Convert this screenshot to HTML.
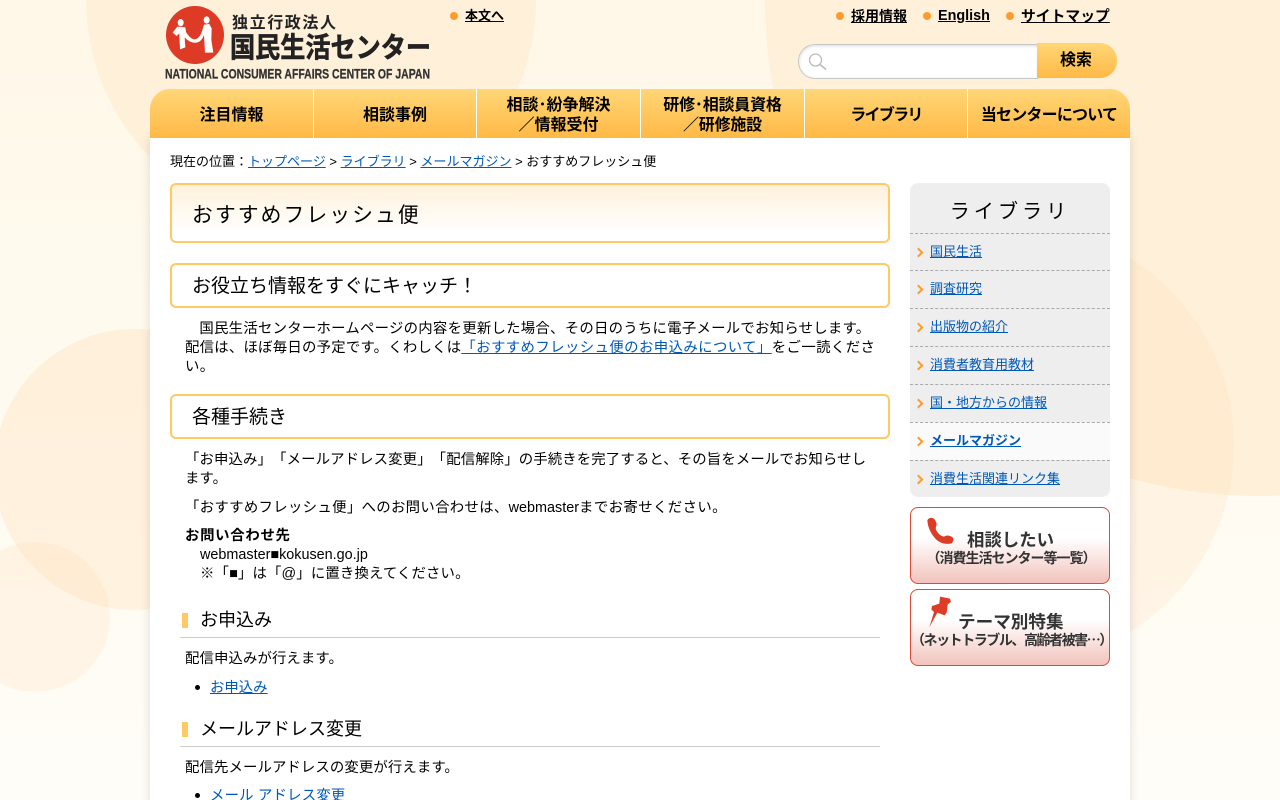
<!DOCTYPE html>
<html lang="ja"><head><meta charset="utf-8"><title>おすすめフレッシュ便</title>
<style>
*{box-sizing:border-box}
html,body{margin:0;padding:0;width:1280px;height:800px;overflow:hidden}
body{position:relative;font-family:"Liberation Sans","Noto Sans CJK JP",sans-serif;font-size:14.4px;line-height:19px;color:#000;background:linear-gradient(#fff8e8,#fffdf8);text-spacing-trim:space-all}
.c{position:absolute;border-radius:50%}
.a{position:absolute;white-space:nowrap}
a{color:#0058b8}
.dot{position:absolute;width:8px;height:8px;border-radius:50%;background:#ff9a2e}
.tl{position:absolute;font-weight:bold;font-size:14px;color:#000;text-decoration:underline;white-space:nowrap;line-height:20px}
#main{position:absolute;left:150px;top:138px;width:980px;height:680px;background:#fff;box-shadow:0 0 10px rgba(0,0,0,.13)}
#nav{position:absolute;left:150px;top:89px;width:980px;height:49px;border-radius:20px 20px 0 0;background:linear-gradient(#ffd677,#ffb945);overflow:hidden}
#nav div{position:absolute;top:0;height:49px;padding-top:4px;display:flex;align-items:center;justify-content:center;text-align:center;font-weight:bold;font-size:16px;line-height:20px;color:#000;border-right:1px solid #fff}
#nav div:last-child{border-right:0}
.h1,.h2{position:absolute;left:170px;width:720px;border:2px solid #ffc965;border-radius:6px;padding-left:20px}
.h1{top:183px;height:60px;line-height:61px;font-size:20.8px;letter-spacing:2.08px;background:linear-gradient(#fff1dc,#fff 85%)}
.h2{height:45px;line-height:43px;font-size:19px;background:#fff}
.h3{position:absolute;left:180px;width:700px;height:29px;border-bottom:1px solid #ccc;font-size:18px;line-height:22px;padding-left:20px}
.h3:before{content:"";position:absolute;left:2px;top:4px;width:6px;height:15px;background:#ffc965}
.p{position:absolute;left:185px;width:700px;white-space:nowrap}
#side{position:absolute;left:910px;top:183px;width:200px;height:314px;background:#eee;border-radius:8px;overflow:hidden}
#side .t{position:absolute;left:0;top:2px;width:200px;text-align:center;font-size:20px;line-height:54px;letter-spacing:4.1px}
#side .i{position:absolute;left:0;width:200px;height:38px;border-top:1px dashed #aaa;font-size:13px;line-height:35px;padding-left:20px}
#side .i:before{content:"";position:absolute;left:5px;top:15px;width:5px;height:5px;border-top:2px solid #ff9a2e;border-right:2px solid #ff9a2e;transform:rotate(45deg)}
.btn{position:absolute;left:910px;width:200px;height:77px;border:1px solid #dd4a36;border-radius:8px;background:linear-gradient(#fff 40%,#f2c3bc);color:#333;font-weight:bold;text-align:center}
.bu{position:absolute;left:195px;width:5px;height:5px;border-radius:50%;background:#000}
</style></head><body>
<div class="c" style="left:86px;top:-225px;width:450px;height:450px;background:#fff0da"></div>
<div class="c" style="left:765px;top:-496px;width:992px;height:992px;background:#fff0da"></div>
<div class="c" style="left:794px;top:225px;width:440px;height:440px;background:rgba(255,215,170,.2)"></div>
<div class="c" style="left:-6px;top:329px;width:281px;height:281px;background:rgba(255,215,170,.28)"></div>
<div class="c" style="left:-40px;top:542px;width:150px;height:150px;background:rgba(255,215,170,.2)"></div>
<div id="main"></div>

<svg style="position:absolute;left:160px;top:0" width="280" height="85" viewBox="160 0 280 85">
<circle cx="195" cy="35" r="29" fill="#de3b26"/>
<g fill="#fff" transform="translate(160 0) scale(.3333)">
<ellipse cx="62" cy="68" rx="9" ry="11"/><ellipse cx="140" cy="60" rx="9" ry="11"/>
<path d="M52 80L38 98L50 108L58 100L60 148L76 142L74 112Q90 130 110 128Q125 125 132 105L135 158L160 158L154 120L155 85L148 72L132 74L124 100Q115 118 102 118Q90 116 78 96L76 82Z"/>
</g>
<text x="232" y="28" font-size="16" font-weight="bold" fill="#222" textLength="104" lengthAdjust="spacing">独立行政法人</text>
<text x="230" y="57" font-size="28" font-weight="bold" fill="#222" textLength="201" lengthAdjust="spacingAndGlyphs" stroke="#222" stroke-width=".6">国民生活センター</text>
<text x="165" y="78.5" font-size="13.5" font-weight="bold" fill="#333" textLength="265" lengthAdjust="spacingAndGlyphs" stroke="#333" stroke-width=".3">NATIONAL CONSUMER AFFAIRS CENTER OF JAPAN</text>
</svg>

<span class="dot" style="left:450px;top:12px"></span><a class="tl" style="left:465px;top:6px;font-size:13px">本文へ</a>
<span class="dot" style="left:836px;top:12px"></span><a class="tl" style="left:851px;top:6px">採用情報</a>
<span class="dot" style="left:923px;top:12px"></span><a class="tl" style="left:938px;top:6px;font-size:14.4px">English</a>
<span class="dot" style="left:1006px;top:12px"></span><a class="tl" style="left:1021px;top:7px;font-size:14.8px">サイトマップ</a>

<div style="position:absolute;left:798px;top:44px;width:240px;height:35px;background:#fff;border:1px solid #c8c8c8;border-right:0;border-radius:17px 0 0 17px;box-shadow:inset 0 1px 3px rgba(0,0,0,.15)"></div>
<svg style="position:absolute;left:806px;top:50px" width="24" height="24" fill="none" stroke="#bbb" stroke-width="1.3"><circle cx="9.5" cy="10" r="6"/><path d="M14 14.5L20 19.5" stroke-width="1.6"/></svg>
<div style="position:absolute;left:1037px;top:43px;width:80px;height:35px;border-radius:0 17px 17px 0;background:linear-gradient(#ffd677,#ffb945);font-weight:bold;font-size:16px;line-height:36px;text-align:center;padding-right:2px">検索</div>

<div id="nav">
<div style="left:0;width:164px">注目情報</div>
<div style="left:164px;width:163px">相談事例</div>
<div style="left:327px;width:164px">相談･紛争解決<br>／情報受付</div>
<div style="left:491px;width:164px;letter-spacing:-.2px">研修･相談員資格<br>／研修施設</div>
<div style="left:655px;width:163px;letter-spacing:-1.7px">ライブラリ</div>
<div style="left:818px;width:162px;letter-spacing:-.8px">当センターについて</div>
</div>

<div class="a" style="left:170px;top:152px;font-size:13px">現在の位置：<a href="#">トップページ</a> &gt; <a href="#">ライブラリ</a> &gt; <a href="#">メールマガジン</a> &gt; おすすめフレッシュ便</div>

<div class="h1">おすすめフレッシュ便</div>
<div class="h2" style="top:263px">お役立ち情報をすぐにキャッチ！</div>
<div class="p" style="top:320px"><span style="margin-left:14.4px;letter-spacing:.25px">国民生活センターホームページの内容を更新した場合、その日のうちに電子メールでお知らせします。</span><br><span style="letter-spacing:.23px">配信は、ほぼ毎日の予定です。くわしくは</span><a href="#" style="letter-spacing:.41px">「おすすめフレッシュ便のお申込みについて」</a><span style="letter-spacing:.4px">をご一読くださ</span><br><span style="letter-spacing:.3px">い。</span></div>
<div class="h2" style="top:394px">各種手続き</div>
<div class="p" style="top:451px;letter-spacing:.12px">「お申込み」「メールアドレス変更」「配信解除」の手続きを完了すると、その旨をメールでお知らせし<br>ます。</div>
<div class="p" style="top:499px"><span style="letter-spacing:.32px">「おすすめフレッシュ便」へのお問い合わせは、</span>webmaster<span style="letter-spacing:.4px">までお寄せください。</span></div>
<div class="p" style="top:527px"><b style="letter-spacing:.7px">お問い合わせ先</b><br><span style="margin-left:15px">webmaster■kokusen.go.jp</span><br><span style="margin-left:15px;letter-spacing:.15px">※「■」は「@」に置き換えてください。</span></div>
<div class="h3" style="top:609px">お申込み</div>
<div class="p" style="top:650px;letter-spacing:.1px">配信申込みが行えます。</div>
<div class="bu" style="top:685px"></div><a class="a" href="#" style="left:210px;top:679px">お申込み</a>
<div class="h3" style="top:718px">メールアドレス変更</div>
<div class="p" style="top:759px;letter-spacing:.1px">配信先メールアドレスの変更が行えます。</div>
<div class="bu" style="top:793px"></div><a class="a" href="#" style="left:210px;top:787px;letter-spacing:.2px">メール アドレス変更</a>

<div id="side">
<div class="t">ライブラリ</div>
<div class="i" style="top:50px"><a href="#">国民生活</a></div>
<div class="i" style="top:87px"><a href="#">調査研究</a></div>
<div class="i" style="top:125px"><a href="#">出版物の紹介</a></div>
<div class="i" style="top:163px"><a href="#">消費者教育用教材</a></div>
<div class="i" style="top:201px"><a href="#">国・地方からの情報</a></div>
<div class="i" style="top:239px;background:#fafafa"><a href="#" style="font-weight:bold">メールマガジン</a></div>
<div class="i" style="top:277px"><a href="#">消費生活関連リンク集</a></div>
</div>

<div class="btn" style="top:507px">
<div class="a" style="left:0;width:198px;top:21px;font-size:17.4px;line-height:22px;padding-left:1px">相談したい</div>
<div class="a" style="left:1px;width:198px;top:40px;font-size:14px;line-height:20px;letter-spacing:-1px">（消費生活センター等一覧）</div>
</div>
<svg style="position:absolute;left:920px;top:510px" width="50" height="40" viewBox="0 0 150 120"><path d="M22 32Q25 22 38 24Q48 28 50 45Q46 52 48 60Q58 78 72 80Q85 72 98 82Q104 90 95 100Q70 106 50 90Q25 65 22 32Z" fill="#dd3d27"/></svg>

<div class="btn" style="top:589px">
<div class="a" style="left:0;width:194px;top:21px;font-size:17.6px;line-height:22px;text-indent:47px;text-align:left">テーマ別特集</div>
<div class="a" style="left:0;width:194px;top:40px;font-size:14px;line-height:20px;letter-spacing:-1.45px">（ネットトラブル、高齢者被害⋯）</div>
</div>
<svg style="position:absolute;left:920px;top:592px" width="40" height="40" viewBox="0 0 120 120"><path d="M60 14L90 20L93 30L83 37L80 62L74 70L52 62L28 106L42 60L34 52L36 42L58 35Z" fill="#dd3d27"/></svg>
</body></html>
